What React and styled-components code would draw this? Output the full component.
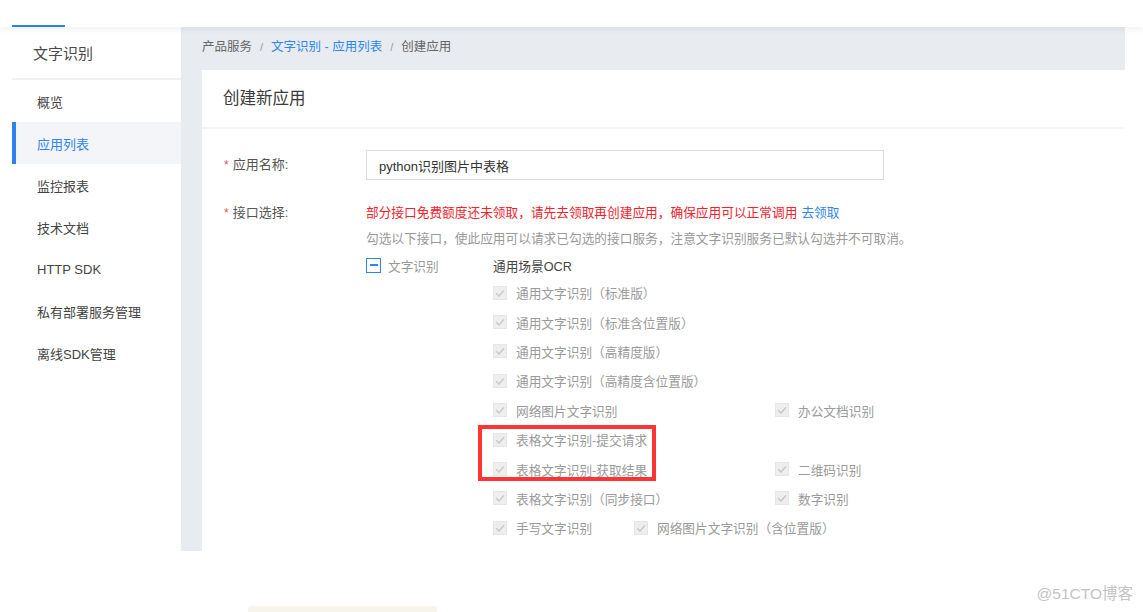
import React from "react";
import styled, { createGlobalStyle } from "styled-components";

const GlobalStyle = createGlobalStyle`
  html, body {
    margin: 0;
    padding: 0;
    background: #fff;
  }
  body {
    font-family: "Liberation Sans", "Noto Sans CJK SC", sans-serif;
    color: #333;
  }
  * {
    box-sizing: border-box;
  }
`;

const Page = styled.div`
  width: 1143px;
  height: 612px;
  overflow: hidden;
  display: flex;
  flex-direction: column;
  background: #fff;
`;

const TopBar = styled.div`
  height: 27px;
  flex-shrink: 0;
  display: flex;
  align-items: flex-end;
  padding-left: 12px;
  background: #fff;
  position: relative;
  z-index: 1;
  box-shadow: 0 2px 7px rgba(30, 40, 60, 0.07);
`;

const TabIndicator = styled.div`
  width: 53px;
  height: 2px;
  background: #2d7ff0;
`;

const Body = styled.div`
  height: 524px;
  flex-shrink: 0;
  display: flex;
  padding: 0 18px 0 12px;
`;

const Sidebar = styled.nav`
  width: 169px;
  flex-shrink: 0;
  background: #fff;
  display: flex;
  flex-direction: column;
`;

const SideTitle = styled.div`
  height: 53px;
  padding-left: 21px;
  display: flex;
  align-items: center;
  font-size: 15px;
  color: #4a4a4a;
  border-bottom: 2px solid #eef0f4;
`;

const SideItem = styled.div`
  height: 42px;
  display: flex;
  align-items: center;
  padding-left: ${(p) => (p.$active ? "21px" : "25px")};
  font-size: 13px;
  color: ${(p) => (p.$active ? "#2f84ee" : "#444")};
  background: ${(p) => (p.$active ? "#f3f5f9" : "transparent")};
  border-left: ${(p) => (p.$active ? "4px solid #2d82ee" : "none")};
`;

const Main = styled.main`
  flex: 1;
  background: #e8ebf0;
  padding-left: 21px;
  display: flex;
  flex-direction: column;
`;

const Breadcrumb = styled.div`
  height: 43px;
  line-height: 40px;
  font-size: 12.5px;
  color: #666;
  display: flex;
  gap: 8px;
`;

const Crumb = styled.span`
  color: ${(p) => (p.$link ? "#2f86f0" : "#666")};
`;

const Sep = styled.span`
  color: #999;
  font-size: 11px;
`;

const Card = styled.section`
  flex: 1;
  background: #fff;
  display: flex;
  flex-direction: column;
`;

const CardHeader = styled.h2`
  margin: 0;
  height: 59px;
  line-height: 57px;
  padding-left: 21px;
  font-size: 16.5px;
  font-weight: normal;
  color: #3a3a3a;
  border-bottom: 2px solid #f4f5f7;
`;

const Form = styled.div`
  padding: 21px 0 0 21px;
  display: flex;
  flex-direction: column;
  gap: 20px;
`;

const FormRow = styled.div`
  display: flex;
  align-items: ${(p) => (p.$center ? "center" : "flex-start")};
`;

const Label = styled.div`
  width: 143px;
  flex-shrink: 0;
  font-size: 13px;
  color: #555;
  line-height: ${(p) => p.$lh || "26px"};
  padding-left: 1px;
`;

const Star = styled.span`
  color: #f05050;
  margin-right: 4px;
  font-size: 12px;
`;

const Input = styled.div`
  width: 518px;
  height: 30px;
  border: 1px solid #dcdcdc;
  padding-left: 12px;
  display: flex;
  align-items: center;
  font-size: 13px;
  color: #333;
`;

const Field = styled.div`
  display: flex;
  flex-direction: column;
  font-size: 12.7px;
`;

const Line = styled.div`
  height: 26px;
  line-height: 26px;
  color: ${(p) => p.$color || "#999"};
  white-space: nowrap;
`;

const Link = styled.span`
  color: #2f86f0;
  margin-left: 4px;
`;

const TreeRow = styled.div`
  height: 26px;
  display: flex;
  align-items: center;
`;

const TreeHead = styled.div`
  width: 127px;
  display: flex;
  align-items: center;
  gap: 7px;
  color: #999;
`;

const MinusBox = styled.span`
  width: 15px;
  height: 15px;
  border: 1.5px solid #2d86ee;
  background: #fff;
  display: flex;
  align-items: center;
  justify-content: center;
  &::after {
    content: "";
    width: 8px;
    height: 2px;
    background: #2d86ee;
  }
`;

const GroupTitle = styled.span`
  color: #444;
`;

const CheckList = styled.div`
  margin-left: 127px;
  position: relative;
`;

const CheckRow = styled.div`
  height: 29.4px;
  display: flex;
  align-items: center;
`;

const CheckItem = styled.label`
  width: ${(p) => p.$w || "auto"};
  display: flex;
  align-items: center;
  gap: 9px;
  color: #9a9a9a;
  white-space: nowrap;
`;

const Box = styled.span`
  width: 14px;
  height: 14px;
  flex-shrink: 0;
  background: #eeeeee;
  border: 1px solid #e6e6e6;
  display: flex;
  align-items: center;
  justify-content: center;
`;

const Highlight = styled.div`
  position: absolute;
  left: -15px;
  top: 147px;
  width: 178px;
  height: 56px;
  border: 4px solid #fb3434;
  pointer-events: none;
`;

const Footer = styled.div`
  flex: 1;
  position: relative;
  display: flex;
  align-items: flex-end;
  padding-left: 248px;
`;

const Drawer = styled.div`
  width: 189px;
  height: 6px;
  background: #f7f4ec;
  border-radius: 3px 3px 0 0;
`;

const Watermark = styled.div`
  position: absolute;
  right: 10px;
  bottom: 9px;
  font-size: 15.5px;
  color: #c4c4c4;
`;

const Check = () => (
  <Box>
    <svg width="12" height="12" viewBox="0 0 12 12">
      <polyline
        points="2.2,6.2 5,9 10,3.4"
        fill="none"
        stroke="#c6c6c6"
        strokeWidth="1.4"
      />
    </svg>
  </Box>
);

const Item = ({ w, children }) => (
  <CheckItem $w={w}>
    <Check />
    <span>{children}</span>
  </CheckItem>
);

const rows = [
  [["通用文字识别（标准版）"]],
  [["通用文字识别（标准含位置版）"]],
  [["通用文字识别（高精度版）"]],
  [["通用文字识别（高精度含位置版）"]],
  [["网络图片文字识别", "282px"], ["办公文档识别"]],
  [["表格文字识别-提交请求"]],
  [["表格文字识别-获取结果", "282px"], ["二维码识别"]],
  [["表格文字识别（同步接口）", "282px"], ["数字识别"]],
  [["手写文字识别", "141px"], ["网络图片文字识别（含位置版）"]],
];

const menu = ["概览", "应用列表", "监控报表", "技术文档", "HTTP SDK", "私有部署服务管理", "离线SDK管理"];

const App = () => {
  return (
    <Page>
      <GlobalStyle />
      <TopBar>
        <TabIndicator />
      </TopBar>
      <Body>
        <Sidebar>
          <SideTitle>文字识别</SideTitle>
          {menu.map((m) => (
            <SideItem key={m} $active={m === "应用列表"}>
              {m}
            </SideItem>
          ))}
        </Sidebar>
        <Main>
          <Breadcrumb>
            <Crumb>产品服务</Crumb>
            <Sep>/</Sep>
            <Crumb $link>文字识别 - 应用列表</Crumb>
            <Sep>/</Sep>
            <Crumb>创建应用</Crumb>
          </Breadcrumb>
          <Card>
            <CardHeader>创建新应用</CardHeader>
            <Form>
              <FormRow $center>
                <Label $lh="30px">
                  <Star>*</Star>应用名称:
                </Label>
                <Input>python识别图片中表格</Input>
              </FormRow>
              <FormRow>
                <Label>
                  <Star>*</Star>接口选择:
                </Label>
                <Field>
                  <Line $color="#f5222d">
                    部分接口免费额度还未领取，请先去领取再创建应用，确保应用可以正常调用
                    <Link>去领取</Link>
                  </Line>
                  <Line>勾选以下接口，使此应用可以请求已勾选的接口服务，注意文字识别服务已默认勾选并不可取消。</Line>
                  <TreeRow>
                    <TreeHead>
                      <MinusBox />
                      <span>文字识别</span>
                    </TreeHead>
                    <GroupTitle>通用场景OCR</GroupTitle>
                  </TreeRow>
                  <CheckList>
                    {rows.map((r, i) => (
                      <CheckRow key={i}>
                        {r.map(([t, w]) => (
                          <Item key={t} w={w}>
                            {t}
                          </Item>
                        ))}
                      </CheckRow>
                    ))}
                    <Highlight />
                  </CheckList>
                </Field>
              </FormRow>
            </Form>
          </Card>
        </Main>
      </Body>
      <Footer>
        <Drawer />
        <Watermark>@51CTO博客</Watermark>
      </Footer>
    </Page>
  );
};

export default App;
